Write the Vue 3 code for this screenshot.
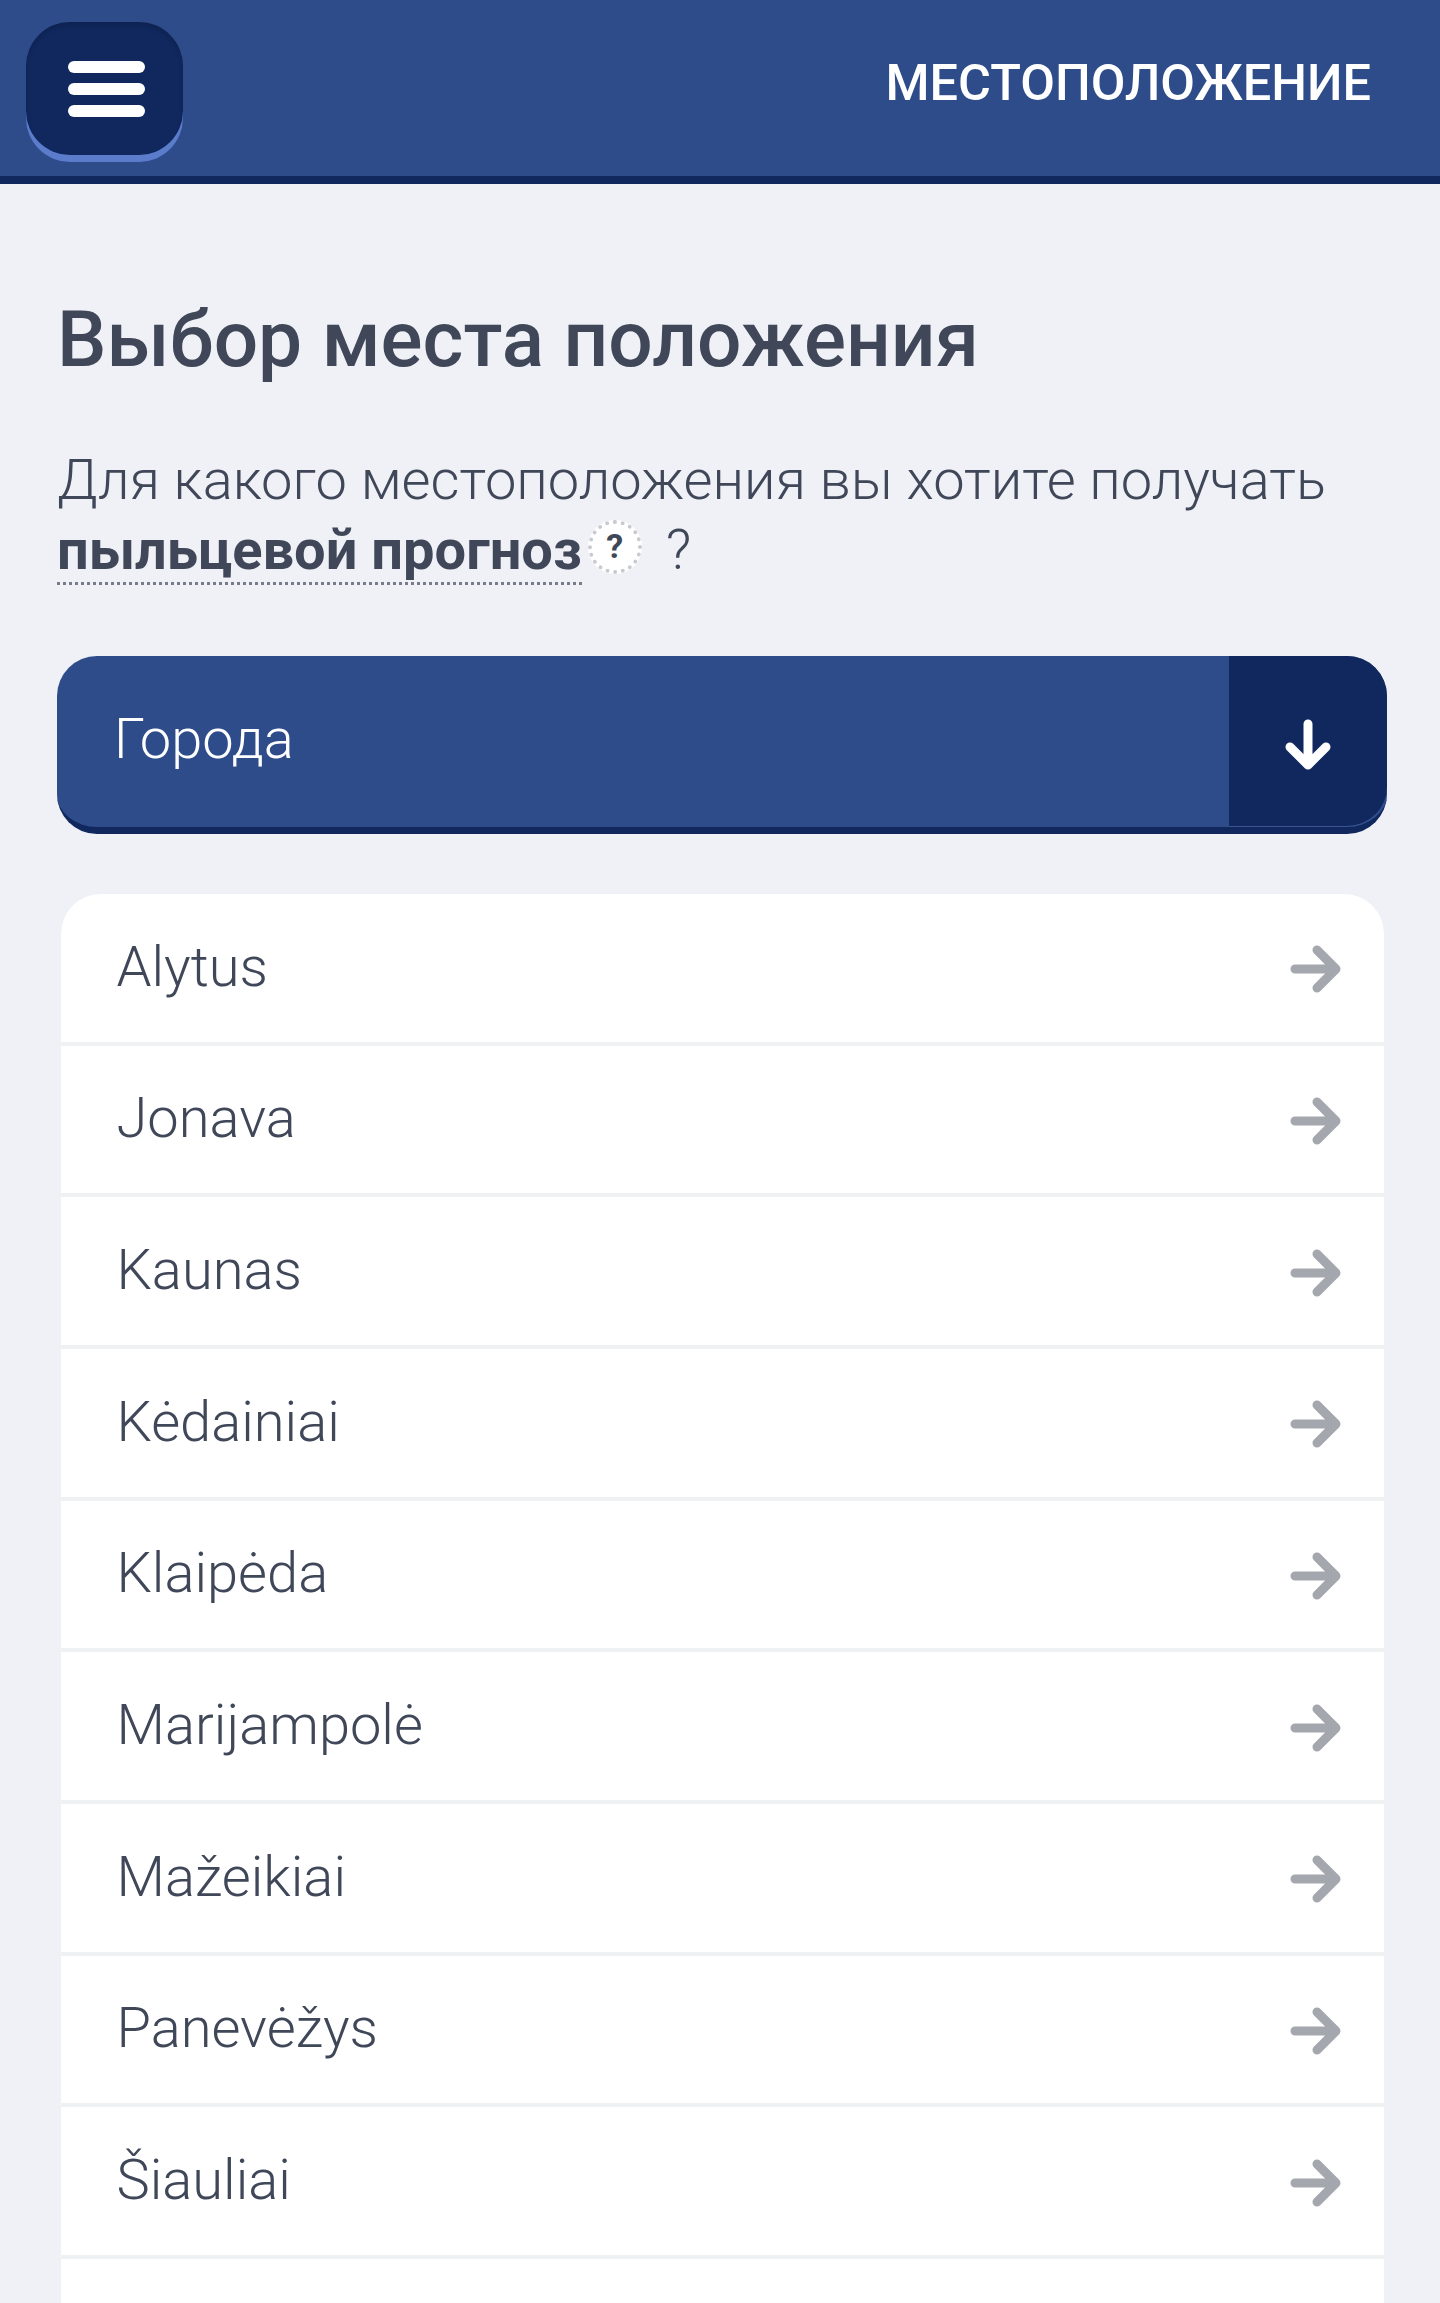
<script setup>
const cities = ['Alytus','Jonava','Kaunas','Kėdainiai','Klaipėda','Marijampolė','Mažeikiai','Panevėžys','Šiauliai']
</script>

<template>
  <div class="page">
    <header class="header">
      <button class="menu" aria-label="menu"><i></i><i></i><i></i></button>
      <span class="header-title">МЕСТОПОЛОЖЕНИЕ</span>
    </header>
    <main class="main">
      <h1 class="title">Выбор места положения</h1>
      <p class="lead">Для какого местоположения вы хотите получать<br><b class="term">пыльцевой прогноз</b><span class="help">?</span><span class="qm">?</span></p>
      <div class="select">
        <span class="select-label">Города</span>
        <span class="select-btn">
          <svg width="48" height="52" viewBox="0 0 48 52" fill="none" stroke="#fff" stroke-width="9" stroke-linecap="round" stroke-linejoin="round"><path d="M24 5V46M6 28L24 46L42 28"/></svg>
        </span>
      </div>
      <ul class="list">
        <li v-for="c in cities" :key="c" class="row">
          <span class="city">{{ c }}</span>
          <svg class="arrow" width="52" height="48" viewBox="0 0 52 48" fill="none" stroke="#a5a7af" stroke-width="9" stroke-linecap="round" stroke-linejoin="round"><path d="M5 24H46M27 5L46 24L27 43"/></svg>
        </li>
      </ul>
    </main>
  </div>
</template>

<style>
html, body { margin: 0; background: #f0f1f6; }
</style>

<style scoped>
.page { width: 1440px; height: 2303px; overflow: hidden; background: #f0f1f6; font-family: Roboto, "Noto Sans", sans-serif; color: #3f4759; }
.header { box-sizing: border-box; height: 184px; background: #2e4c8a; border-bottom: 8px solid #10285e; display: flex; align-items: flex-start; justify-content: space-between; padding: 22px 69px 0 26px; }
.menu { box-sizing: border-box; width: 157px; height: 133px; padding: 39px 0 0 3px; border: 0; border-radius: 44px; background: #10285e; box-shadow: 0 7px 0 #5a7ccb, inset 0 4px 4px rgba(0,0,0,.12); display: flex; flex-direction: column; align-items: center; gap: 10.5px; }
.menu i { display: block; width: 77px; height: 11.5px; border-radius: 6px; background: #fff; }
.header-title { font-size: 50.4px; font-weight: 500; color: #fff; line-height: 60px; margin-top: 31px; }
.main { padding: 0 53px 0 57px; }
.title { margin: 0; padding-top: 107px; font-size: 78.4px; line-height: 96px; font-weight: 500; color: #3f4759; }
.lead { margin: 58px 0 0; height: 140px; font-size: 56px; line-height: 70px; font-weight: 300; }
.term { font-weight: 700; border-bottom: 3px dotted #777c8a; display: inline-block; line-height: 64px; }
.help { display: inline-block; box-sizing: border-box; width: 54px; height: 54px; margin-left: 6px; border: 4px dotted #c9cad0; border-radius: 50%; background: #fff; font-size: 34px; font-weight: 700; line-height: 44px; text-align: center; vertical-align: 11px; }
.qm { margin-left: 24px; }
.select { margin-top: 71px; height: 178px; box-sizing: border-box; border-radius: 40px; background: #2e4c8a; border-bottom: 7px solid #10285e; display: flex; overflow: hidden; }
.select-label { flex: 1; padding-left: 57px; color: #fff; font-size: 56px; font-weight: 300; line-height: 166px; }
.select-btn { width: 158px; display: flex; align-items: center; justify-content: center; background: #10285e; padding-top: 8px; border-bottom: 1px solid #3a5690; border-radius: 0 0 40px 0; }
.list { list-style: none; margin: 60px 3.5px 0; padding: 0 0 100px; background: #fff; border-radius: 40px 40px 0 0; }
.row { box-sizing: border-box; height: 151.67px; display: flex; align-items: center; justify-content: space-between; padding: 0 42px 0 56px; border-bottom: 4px solid #f0f1f3; }
.city { font-size: 56px; font-weight: 300; margin-top: -2px; }
.arrow { margin-top: 3px; }
</style>
